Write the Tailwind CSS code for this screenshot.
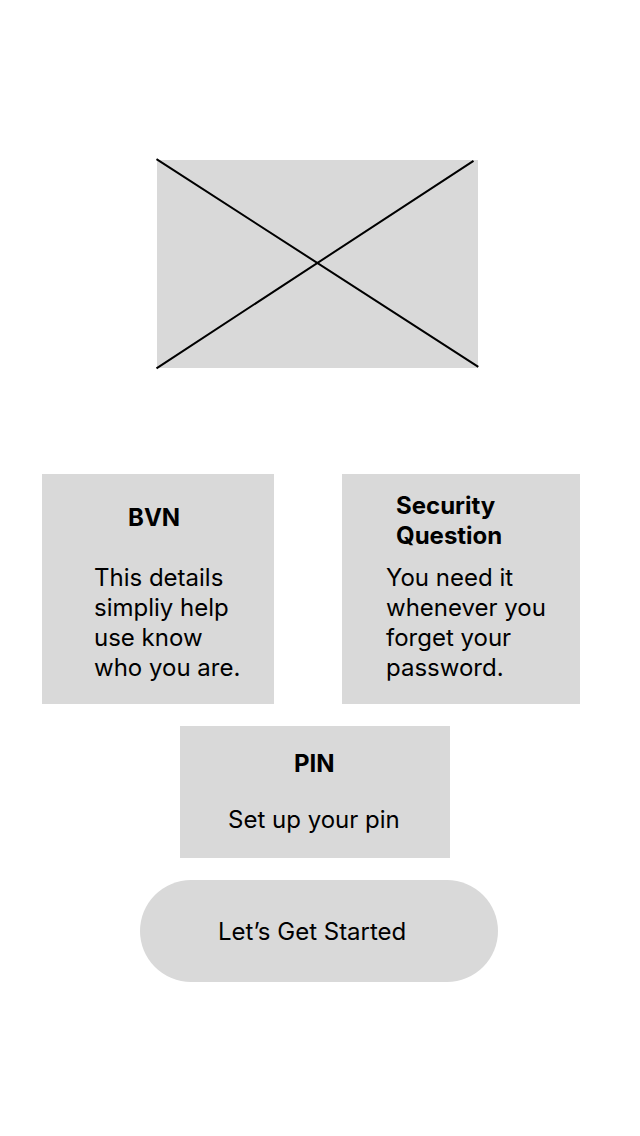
<!DOCTYPE html>
<html lang="en">
<head>
<meta charset="utf-8">
<meta name="viewport" content="width=device-width, initial-scale=1">
<title>Get Started</title>
<script src="https://cdn.jsdelivr.net/npm/@tailwindcss/browser@4"></script>
</head>
<body class="bg-white font-['Inter',sans-serif] text-2xl leading-[30px] text-black">
<main class="flex min-h-screen flex-col pt-40 pb-10">
  <div class="pr-[162px] pl-[157px]">
    <svg class="block w-full overflow-visible" viewBox="0 0 321 208" role="img" aria-label="Image placeholder" fill="none" stroke="black" stroke-width="2">
      <rect width="321" height="208" fill="#d9d9d9" stroke="none"/>
      <path d="M-0.5 -0.8L321.3 206.8M-0.5 208.3L316.5 0.8"/>
    </svg>
  </div>
  <div class="mt-[106px] grid grid-cols-[232fr_238fr] gap-[68px] pr-[60px] pl-[42px]">
    <section class="bg-[#d9d9d9] pt-[29px] pb-[21px]">
      <h2 class="pl-[86px] font-bold">BVN</h2>
      <p class="mt-[30px] pl-[52px]">This details<br>simpliy help<br>use know<br>who you are.</p>
    </section>
    <section class="bg-[#d9d9d9] pt-[17px] pb-[21px]">
      <h2 class="pl-[54px] font-bold">Security<br>Question</h2>
      <p class="mt-3 pl-11">You need it<br>whenever you<br>forget your<br>password.</p>
    </section>
  </div>
  <div class="mt-[22px] pr-[190px] pl-[180px]">
    <section class="bg-[#d9d9d9] pt-[23px] pb-[23px]">
      <h2 class="pl-[114px] font-bold">PIN</h2>
      <p class="mt-[26px] pl-12">Set up your pin</p>
    </section>
  </div>
  <div class="mt-[22px] pr-[142px] pl-[140px]">
    <button type="button" class="block w-full rounded-full bg-[#d9d9d9] pt-[37px] pb-[35px] pl-[78px] text-left">Let’s Get Started</button>
  </div>
</main>
</body>
</html>
